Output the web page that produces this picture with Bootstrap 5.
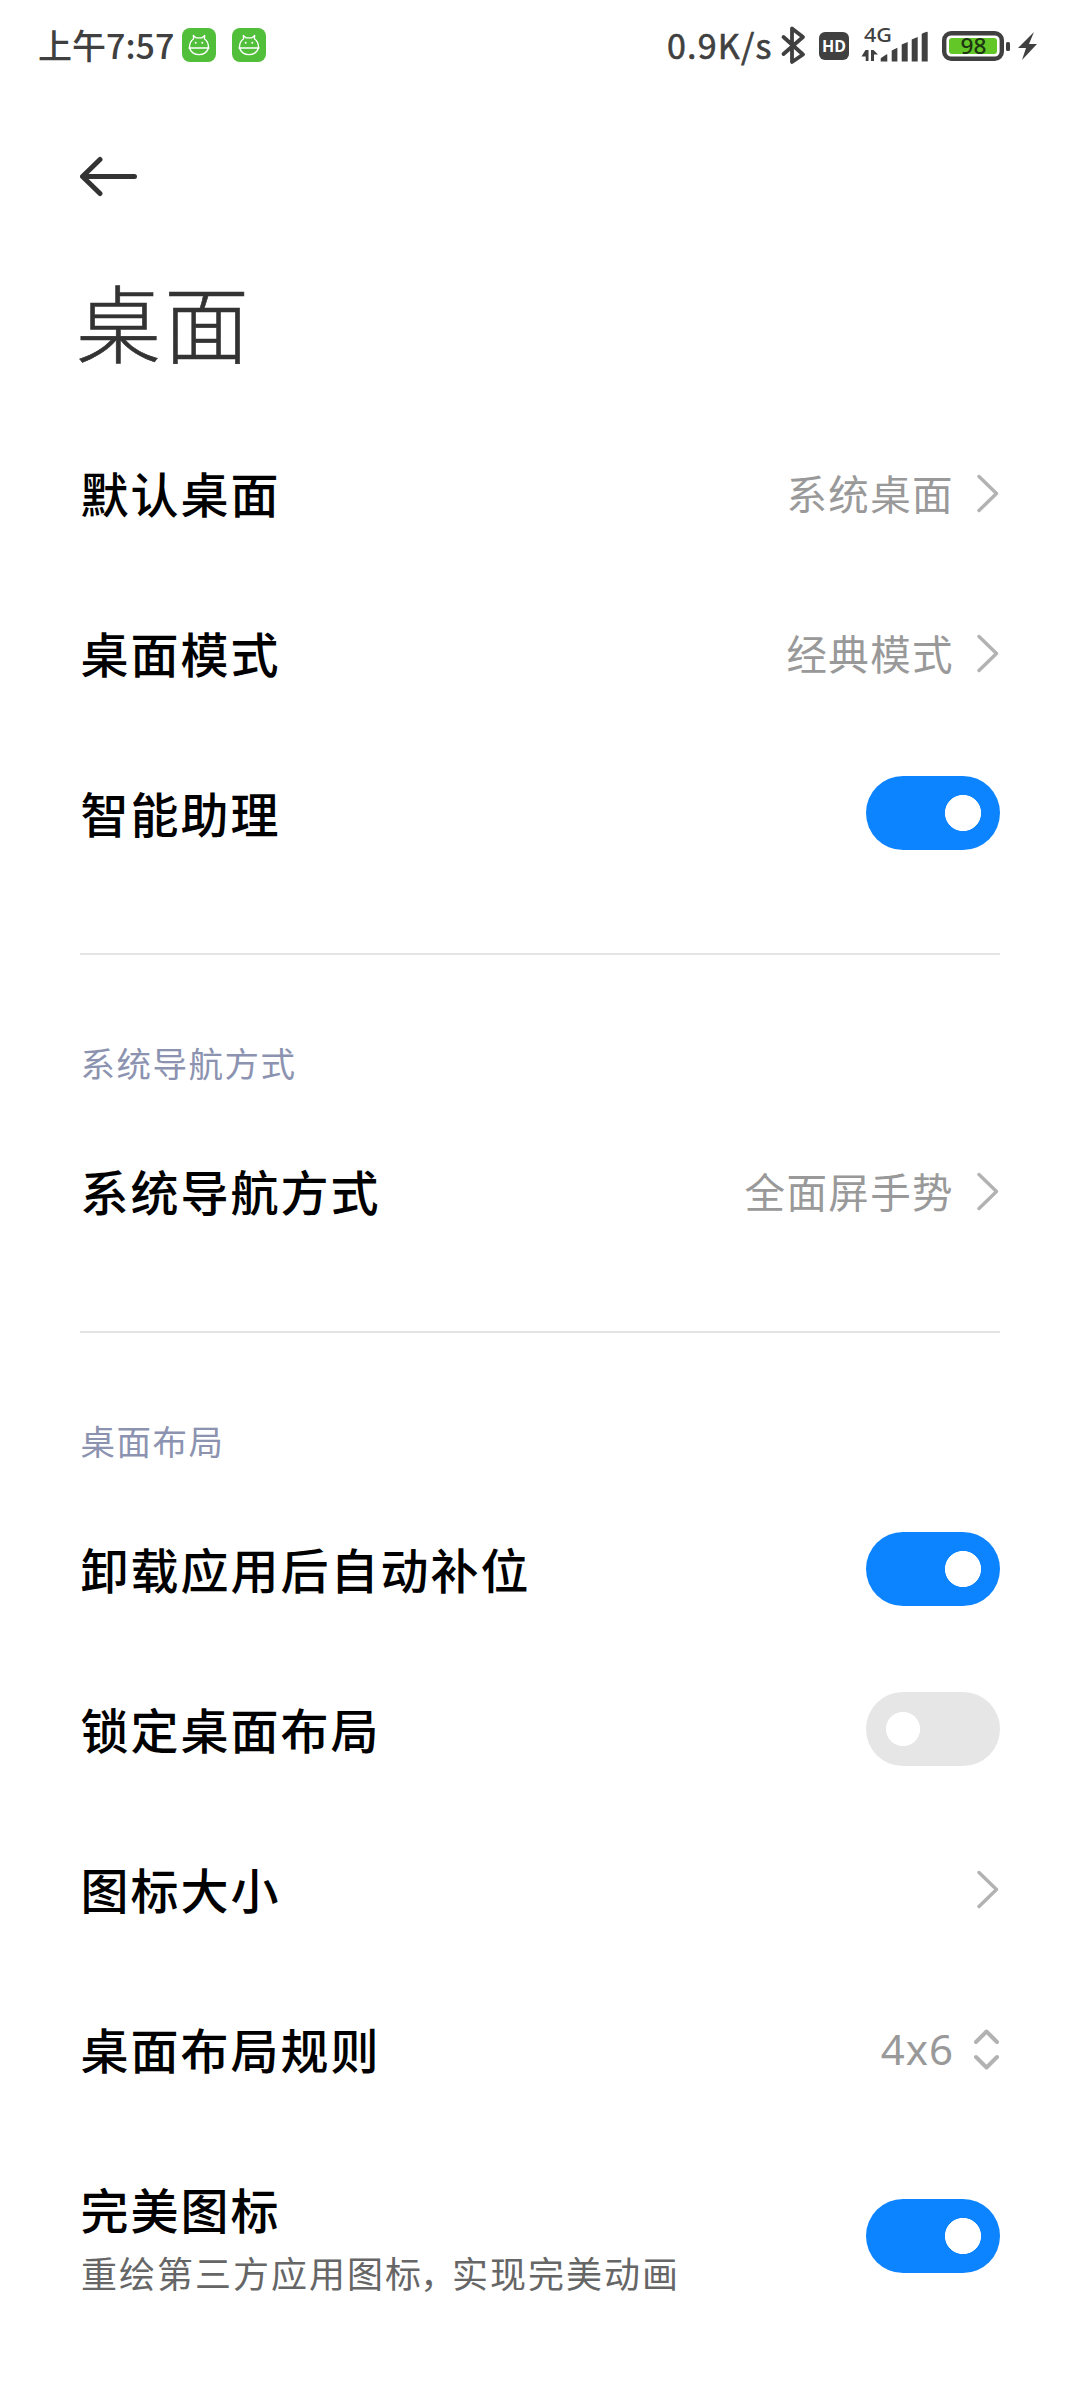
<!DOCTYPE html>
<html lang="zh-CN">
<head>
<meta charset="utf-8">
<meta name="viewport" content="width=device-width, initial-scale=1">
<title>桌面</title>
<link href="https://cdn.jsdelivr.net/npm/bootstrap@5.3.0/dist/css/bootstrap.min.css" rel="stylesheet">
<style>
body{width:1080px;height:2400px;overflow:hidden;background:#fff;color:#000;font-family:"Noto Sans CJK SC","Noto Sans",sans-serif}
svg{display:block;flex:none}
.statusbar{height:90px;padding:0 42px 0 38px;color:#404040;font-size:34px;line-height:1;font-weight:500}
.clock{width:144px;white-space:nowrap}
.speed{font-weight:400;width:113px;white-space:nowrap;letter-spacing:1.2px;-webkit-text-stroke:.6px #404040}
.appbar{height:170px;padding:64px 0 0 80px}
.page-title{height:153px;margin:0;padding-left:76px;font-size:85px;font-weight:300;line-height:120px;letter-spacing:3px;color:#333;-webkit-text-stroke:.6px #333}
.settings{padding:0 80px}
.item{height:160px}
.item-tall{height:214px;padding-top:3px}
.label{font-size:48px;font-weight:500;line-height:58px;letter-spacing:2px;padding-left:.5px;margin-bottom:2px}
.value{font-size:40.5px;line-height:60px;letter-spacing:1.4px;color:#999;margin-right:23px}
.value-latin{font-family:"Noto Sans",sans-serif;font-size:42px;letter-spacing:1px;margin-right:20px}
.sub{font-size:36px;line-height:50px;letter-spacing:2px;color:#666;padding-left:1px}
.comma{letter-spacing:-4px;margin-left:-3px}
.group-title{margin-top:60px;border-top:2px solid #e4e4e4;height:158px;padding:77px 0 0 .5px;font-size:34.5px;line-height:60px;letter-spacing:1.5px;color:#8c93b0}
.form-check-input.toggle{width:134px;height:74px;margin:0;border:0;border-radius:37px;background:radial-gradient(circle at 37px 37px,#fff 16.7px,#e6e6e6 17.4px)}
.form-check-input.toggle:checked{background:radial-gradient(circle at 97px 37px,#fff 17.7px,#0d84ff 18.4px)}
.item-tall .toggle{margin-top:-3px}
</style>
</head>
<body>
<header class="statusbar d-flex align-items-center">
  <span class="clock">上午7:57</span>
  <svg width="84" height="34" viewBox="0 0 84 34">
    <defs><g id="droid"><rect width="34" height="34" rx="8" fill="#52bf3b"/><g fill="none" stroke="#fff" stroke-width="1.300" stroke-linejoin="round" stroke-linecap="round"><path d="M7.600 20C7.200 15.500 8.500 13 11.600 10.800L11.300 7.500 14 9.800h6L22.700 7.500l-.3 3.300C25.500 13 26.800 15.500 26.400 20"/><path d="M7 20h20M7.600 20c.8 4 4.800 6.700 9.400 6.700s8.600-2.700 9.400-6.700"/></g><circle cx="13.700" cy="14.800" r="1" fill="#fff"/><circle cx="20.300" cy="14.800" r="1" fill="#fff"/></g></defs>
    <use href="#droid"/><use href="#droid" x="50"/>
  </svg>
  <span class="speed ms-auto">0.9K/s</span>
  <svg width="258" height="60" viewBox="780 14 258 60" fill="#404040">
    <path d="M783.500 36l19.500 17.500-11 7.500V27.500l11 8.500-19.500 17" fill="none" stroke="#404040" stroke-width="3.800" stroke-linecap="round" stroke-linejoin="round"/>
    <rect x="819" y="31" width="30" height="28" rx="6"/>
    <text x="834" y="51" text-anchor="middle" font-family="Noto Sans" font-size="16" font-weight="700" textLength="24" lengthAdjust="spacingAndGlyphs" fill="#fff">HD</text>
    <text x="864" y="41" font-family="Noto Sans" font-size="19.500" textLength="28" lengthAdjust="spacingAndGlyphs">4G</text>
    <path d="M865.500 49h3v11h-2.800v-4.500H861.500zM871 49h2.500l4.500 4.500h-4V60H871zM880.700 60.500v-2.800q0-.7.600-1l5-3.200q1-.5 1 .5v6.500zM891.700 60.500V49.500l5.700-2.700v13.700zM901.700 60.500V43.500l6-2.500v19.500zM911.700 60.500V38.500l6-2.500v24.500zM921.700 60.500V33.500q0-1 1-1.300l4-1.500q1-.3 1 .8v29z"/>
    <rect x="944.200" y="32.200" width="57.600" height="25.600" rx="7" fill="none" stroke="#404040" stroke-width="4.400"/>
    <rect x="949" y="37" width="48" height="16" rx="3" fill="#63c728"/>
    <text x="973.500" y="53" text-anchor="middle" font-family="Noto Sans" font-size="22" textLength="26" lengthAdjust="spacingAndGlyphs" fill="#1e3512">98</text>
    <rect x="1006" y="41" width="4" height="9" rx="1.500"/>
    <path d="M1034 31L1018 47h8l-4 12L1037 43h-8z"/>
  </svg>
</header>

<nav class="appbar"><svg width="60" height="44" viewBox="0 0 60 44" fill="none" stroke="#333" stroke-width="5" stroke-linecap="round" stroke-linejoin="round"><path d="M20 5.500L2.500 22.500 20 39.500M4 22.500H54.500"/></svg></nav>
<h1 class="page-title">桌面</h1>

<main class="settings">
  <svg width="0" height="0" class="position-absolute"><defs>
    <g id="chev" fill="none" stroke="#b2b2b2" stroke-width="3.400" stroke-linecap="round" stroke-linejoin="round"><path d="M2 2.500L19.500 19.500 2 36.500"/></g>
  </defs></svg>
  <div class="item d-flex align-items-center justify-content-between"><span class="label">默认桌面</span><span class="d-flex align-items-center"><span class="value">系统桌面</span><svg width="23" height="39"><use href="#chev"/></svg></span></div>
  <div class="item d-flex align-items-center justify-content-between"><span class="label">桌面模式</span><span class="d-flex align-items-center"><span class="value">经典模式</span><svg width="23" height="39"><use href="#chev"/></svg></span></div>
  <div class="item d-flex align-items-center justify-content-between"><span class="label">智能助理</span><input class="form-check-input toggle" type="checkbox" role="switch" checked></div>

  <h2 class="group-title mb-0 fw-normal">系统导航方式</h2>
  <div class="item d-flex align-items-center justify-content-between"><span class="label">系统导航方式</span><span class="d-flex align-items-center"><span class="value">全面屏手势</span><svg width="23" height="39"><use href="#chev"/></svg></span></div>

  <h2 class="group-title mb-0 fw-normal">桌面布局</h2>
  <div class="item d-flex align-items-center justify-content-between"><span class="label">卸载应用后自动补位</span><input class="form-check-input toggle" type="checkbox" role="switch" checked></div>
  <div class="item d-flex align-items-center justify-content-between"><span class="label">锁定桌面布局</span><input class="form-check-input toggle" type="checkbox" role="switch"></div>
  <div class="item d-flex align-items-center justify-content-between"><span class="label">图标大小</span><svg width="23" height="39"><use href="#chev"/></svg></div>
  <div class="item d-flex align-items-center justify-content-between"><span class="label">桌面布局规则</span><span class="d-flex align-items-center"><span class="value value-latin">4x6</span><svg width="26" height="42" viewBox="0 0 26 42" fill="none" stroke="#b2b2b2" stroke-width="4" stroke-linecap="round" stroke-linejoin="round"><path d="M2 14L12.500 3.500 23 14M2 29L12.500 39.500 23 29"/></svg></span></div>
  <div class="item item-tall d-flex align-items-center justify-content-between"><div class="d-flex flex-column gap-2"><span class="label">完美图标</span><span class="sub">重绘第三方应用图标<span class="comma">，</span>实现完美动画</span></div><input class="form-check-input toggle" type="checkbox" role="switch" checked></div>
</main>
<script src="https://cdn.jsdelivr.net/npm/bootstrap@5.3.0/dist/js/bootstrap.bundle.min.js"></script>
</body>
</html>
